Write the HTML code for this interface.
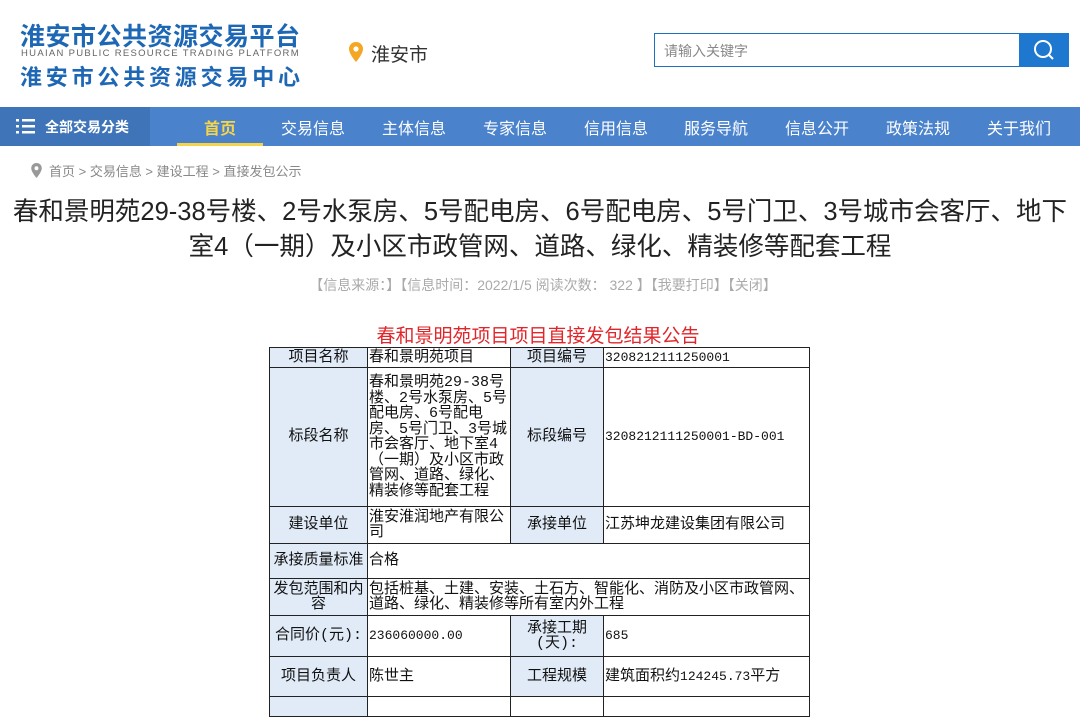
<!DOCTYPE html>
<html><head><meta charset="utf-8"><style>
*{margin:0;padding:0;box-sizing:border-box}
body{width:1080px;height:697px;overflow:hidden;background:#fff;font-family:"Liberation Sans","Noto Sans CJK SC",sans-serif;position:relative}
.logo1{position:absolute;left:20px;top:17px;font-size:25px;font-weight:bold;color:#1d67b4;letter-spacing:0.5px;white-space:nowrap}
.logo2{position:absolute;left:21px;top:48px;font-size:9.5px;color:#666;letter-spacing:1.3px;white-space:nowrap}
.logo3{position:absolute;left:20px;top:60px;font-size:22px;font-weight:bold;color:#1d67b4;letter-spacing:3.8px;white-space:nowrap}
.city{position:absolute;left:371px;top:40px;font-size:19px;color:#333}
.search{position:absolute;left:654px;top:33px;width:366px;height:34px;border:1px solid #1d6fc0;font-size:14px;color:#888;padding:7px 9px}
.sbtn{position:absolute;left:1019px;top:33px;width:50px;height:34px;background:#1e78cf}
.nav{position:absolute;left:0;top:107px;width:1080px;height:39px;background:#4a82cc}
.navl{position:absolute;left:0;top:0;width:150px;height:39px;background:#3f74b9;color:#fff;font-size:14px;font-weight:bold;padding:10px 0 0 45px}
.nav span{position:absolute;top:8px;color:#fff;font-size:16px}
.crumb{position:absolute;left:49px;top:161px;font-size:13px;color:#888}
.title{position:absolute;left:0;top:195px;width:1080px;text-align:center;font-size:25.5px;line-height:35px;color:#222}
.meta{position:absolute;left:0;top:275px;width:1080px;text-align:center;font-size:14px;color:#aaa;padding-left:6px}
.rt{position:absolute;left:0;top:321px;width:1076px;text-align:center;font-size:19px;color:#e0262a}
table{position:absolute;left:269px;top:347px;border-collapse:collapse;font-family:"Liberation Mono","Noto Sans CJK SC",sans-serif;font-size:15px;color:#111}
td{border:1px solid #222;padding:0 1px;line-height:15.5px;vertical-align:middle;overflow:hidden}
td.l{background:#e1ebf7;text-align:center;font-size:15px}
</style></head><body>
<div class="logo1">淮安市公共资源交易平台</div>
<div class="logo2">HUAIAN PUBLIC RESOURCE TRADING PLATFORM</div>
<div class="logo3">淮安市公共资源交易中心</div>
<svg style="position:absolute;left:349px;top:42px" width="14" height="20" viewBox="0 0 14 20"><path d="M7 0C3 0 0 3 0 7c0 5 7 13 7 13s7-8 7-13C14 3 11 0 7 0z" fill="#f5a623"/><circle cx="7" cy="7" r="2.6" fill="#fff"/></svg>
<div class="city">淮安市</div>
<div class="search">请输入关键字</div>
<div class="sbtn"><svg width="50" height="34" viewBox="0 0 50 34"><circle cx="24" cy="16" r="8" fill="none" stroke="#fff" stroke-width="2"/><path d="M30 22l4 4" stroke="#fff" stroke-width="2"/></svg></div>
<div class="nav">
<div class="navl">全部交易分类</div>
<svg style="position:absolute;left:16px;top:11px" width="20" height="16"><g fill="#fff"><rect x="0" y="1" width="3" height="2.5"/><rect x="6" y="1" width="13" height="2.5"/><rect x="0" y="7" width="3" height="2.5"/><rect x="6" y="7" width="13" height="2.5"/><rect x="0" y="13" width="3" height="2.5"/><rect x="6" y="13" width="13" height="2.5"/></g></svg>
<span style="left:204px;color:#f5d44a;font-weight:bold">首页</span>
<div style="position:absolute;left:177px;top:36px;width:86px;height:3px;background:#f5d44a"></div>
<span style="left:281px">交易信息</span><span style="left:382px">主体信息</span><span style="left:483px">专家信息</span><span style="left:584px">信用信息</span><span style="left:684px">服务导航</span><span style="left:785px">信息公开</span><span style="left:886px">政策法规</span><span style="left:987px">关于我们</span>
</div>
<svg style="position:absolute;left:31px;top:163px" width="11" height="15" viewBox="0 0 14 20"><path d="M7 0C3 0 0 3 0 7c0 5 7 13 7 13s7-8 7-13C14 3 11 0 7 0z" fill="#999"/><circle cx="7" cy="7" r="2.6" fill="#fff"/></svg>
<div class="crumb">首页 &gt; 交易信息 &gt; 建设工程 &gt; 直接发包公示</div>
<div class="title">春和景明苑29-38号楼、2号水泵房、5号配电房、6号配电房、5号门卫、3号城市会客厅、地下<br>室4（一期）及小区市政管网、道路、绿化、精装修等配套工程</div>
<div class="meta">【信息来源：】【信息时间：2022/1/5 阅读次数： 322 】【我要打印】【关闭】</div>
<div class="rt">春和景明苑项目项目直接发包结果公告</div>
<table>
<colgroup><col style="width:98px"><col style="width:143px"><col style="width:93px"><col style="width:206px"></colgroup>
<tr style="height:20px"><td class="l">项目名称</td><td>春和景明苑项目</td><td class="l">项目编号</td><td style="font-size:13px">3208212111250001</td></tr>
<tr style="height:139px"><td class="l">标段名称</td><td>春和景明苑29-38号楼、2号水泵房、5号配电房、6号配电房、5号门卫、3号城市会客厅、地下室4（一期）及小区市政管网、道路、绿化、精装修等配套工程</td><td class="l">标段编号</td><td style="font-size:13px">3208212111250001-BD-001</td></tr>
<tr style="height:37px"><td class="l">建设单位</td><td>淮安淮润地产有限公司</td><td class="l">承接单位</td><td>江苏坤龙建设集团有限公司</td></tr>
<tr style="height:35px"><td class="l">承接质量标准</td><td colspan="3">合格</td></tr>
<tr style="height:37px"><td class="l">发包范围和内容</td><td colspan="3">包括桩基、土建、安装、土石方、智能化、消防及小区市政管网、道路、绿化、精装修等所有室内外工程</td></tr>
<tr style="height:41px"><td class="l">合同价(元):</td><td style="font-size:13px">236060000.00</td><td class="l">承接工期(天):</td><td style="font-size:13px">685</td></tr>
<tr style="height:40px"><td class="l">项目负责人</td><td>陈世主</td><td class="l">工程规模</td><td>建筑面积约<span style="font-size:13px">124245.73</span>平方</td></tr>
<tr style="height:20px"><td class="l"></td><td></td><td></td><td></td></tr>
</table>
</body></html>
